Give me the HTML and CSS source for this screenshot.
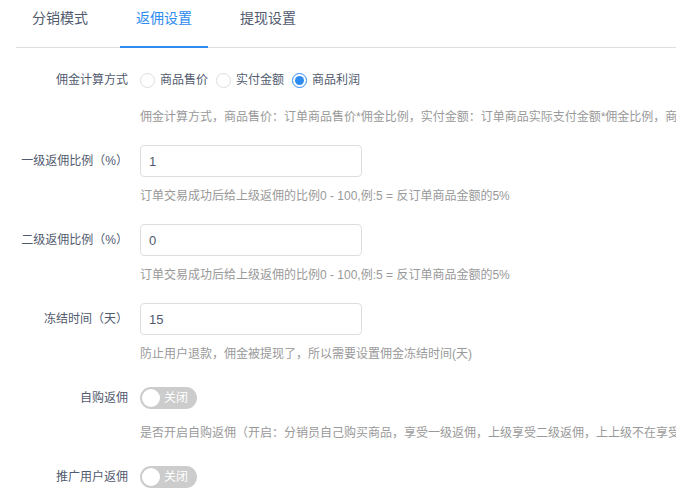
FILE: index.html
```html
<!DOCTYPE html>
<html lang="zh-CN">
<head>
<meta charset="utf-8">
<title>返佣设置</title>
<link rel="stylesheet" href="styles.css">
</head>
<body>
<div class="page">
  <div class="tabs">
    <div class="tab">分销模式</div>
    <div class="tab active">返佣设置</div>
    <div class="tab">提现设置</div>
  </div>

  <div class="form">
    <div class="item">
      <div class="row">
        <label class="label">佣金计算方式</label>
        <div class="control">
          <span class="radio"><span class="circle"></span><span>商品售价</span></span>
          <span class="radio"><span class="circle"></span><span>实付金额</span></span>
          <span class="radio"><span class="circle checked"></span><span>商品利润</span></span>
        </div>
      </div>
      <div class="help first">佣金计算方式，商品售价：订单商品售价*佣金比例，实付金额：订单商品实际支付金额*佣金比例，商品利润：订单商品利润*佣金比例</div>
    </div>

    <div class="item">
      <div class="row">
        <label class="label">一级返佣比例（%）</label>
        <div class="control"><input class="input" type="text" value="1"></div>
      </div>
      <div class="help">订单交易成功后给上级返佣的比例0 - 100,例:5 = 反订单商品金额的5%</div>
    </div>

    <div class="item">
      <div class="row">
        <label class="label">二级返佣比例（%）</label>
        <div class="control"><input class="input" type="text" value="0"></div>
      </div>
      <div class="help">订单交易成功后给上级返佣的比例0 - 100,例:5 = 反订单商品金额的5%</div>
    </div>

    <div class="item">
      <div class="row">
        <label class="label">冻结时间（天）</label>
        <div class="control"><input class="input" type="text" value="15"></div>
      </div>
      <div class="help">防止用户退款，佣金被提现了，所以需要设置佣金冻结时间(天)</div>
    </div>

    <div class="item">
      <div class="row">
        <label class="label">自购返佣</label>
        <div class="control"><span class="switch"><span class="knob"></span><span class="switch-text">关闭</span></span></div>
      </div>
      <div class="help">是否开启自购返佣（开启：分销员自己购买商品，享受一级返佣，上级享受二级返佣，上上级不在享受返佣；关闭：分销员自己购买商品没有返佣）</div>
    </div>

    <div class="item">
      <div class="row">
        <label class="label">推广用户返佣</label>
        <div class="control"><span class="switch"><span class="knob"></span><span class="switch-text">关闭</span></span></div>
      </div>
    </div>
  </div>
</div>
</body>
</html>
```

FILE: styles.css
```css
html, body {
  margin: 0;
  padding: 0;
  overflow: hidden;
  background: #fff;
}

body {
  font-family: "Liberation Sans", "Noto Sans CJK SC", sans-serif;
  font-size: 12px;
  color: #515a6e;
}

.page {
  padding-left: 16px;
}

.tabs {
  display: flex;
  height: 47px;
  border-bottom: 1px solid #dcdee2;
}

.tab {
  position: relative;
  padding: 8px 16px 0;
  margin-right: 16px;
  font-size: 14px;
  line-height: 20px;
  color: #515a6e;
}

.tab.active {
  color: #2d8cf0;
}

.tab.active::after {
  content: "";
  position: absolute;
  left: 0;
  right: 0;
  bottom: -1px;
  height: 2px;
  background: #2d8cf0;
}

.form {
  padding-top: 16px;
}

.item {
  margin-bottom: 18px;
}

.row {
  display: flex;
  align-items: center;
  height: 32px;
}

.label {
  width: 112px;
  padding-right: 12px;
  text-align: right;
  line-height: 20px;
  white-space: nowrap;
  flex: none;
}

.control {
  display: flex;
  align-items: center;
}

.radio {
  display: inline-flex;
  align-items: center;
  margin-right: 8px;
  line-height: 20px;
  white-space: nowrap;
}

.circle {
  box-sizing: border-box;
  width: 15px;
  height: 15px;
  border: 1px solid #dcdee2;
  border-radius: 50%;
  margin-right: 5px;
  position: relative;
  background: #fff;
}

.circle.checked {
  border-color: #2d8cf0;
}

.circle.checked::after {
  content: "";
  position: absolute;
  left: 2px;
  top: 2px;
  width: 9px;
  height: 9px;
  border-radius: 50%;
  background: #2d8cf0;
}

.input {
  box-sizing: border-box;
  width: 222px;
  height: 32px;
  border: 1px solid #dcdee2;
  border-radius: 4px;
  padding: 0 8px;
  font-family: "Liberation Sans", "Noto Sans CJK SC", sans-serif;
  font-size: 13px;
  color: #515a6e;
  outline: none;
  margin: 0;
}

.help {
  margin-top: 9px;
  padding-left: 124px;
  line-height: 20px;
  color: #999;
  white-space: nowrap;
}

.help.first {
  margin-top: 11px;
}

.switch {
  position: relative;
  display: inline-block;
  width: 57px;
  height: 22px;
  border-radius: 11px;
  background: #ccc;
}

.knob {
  position: absolute;
  left: 2px;
  top: 2px;
  width: 18px;
  height: 18px;
  border-radius: 50%;
  background: #fff;
}

.switch-text {
  position: absolute;
  left: 24px;
  top: 0;
  line-height: 22px;
  color: #fff;
  font-size: 12px;
}
```
